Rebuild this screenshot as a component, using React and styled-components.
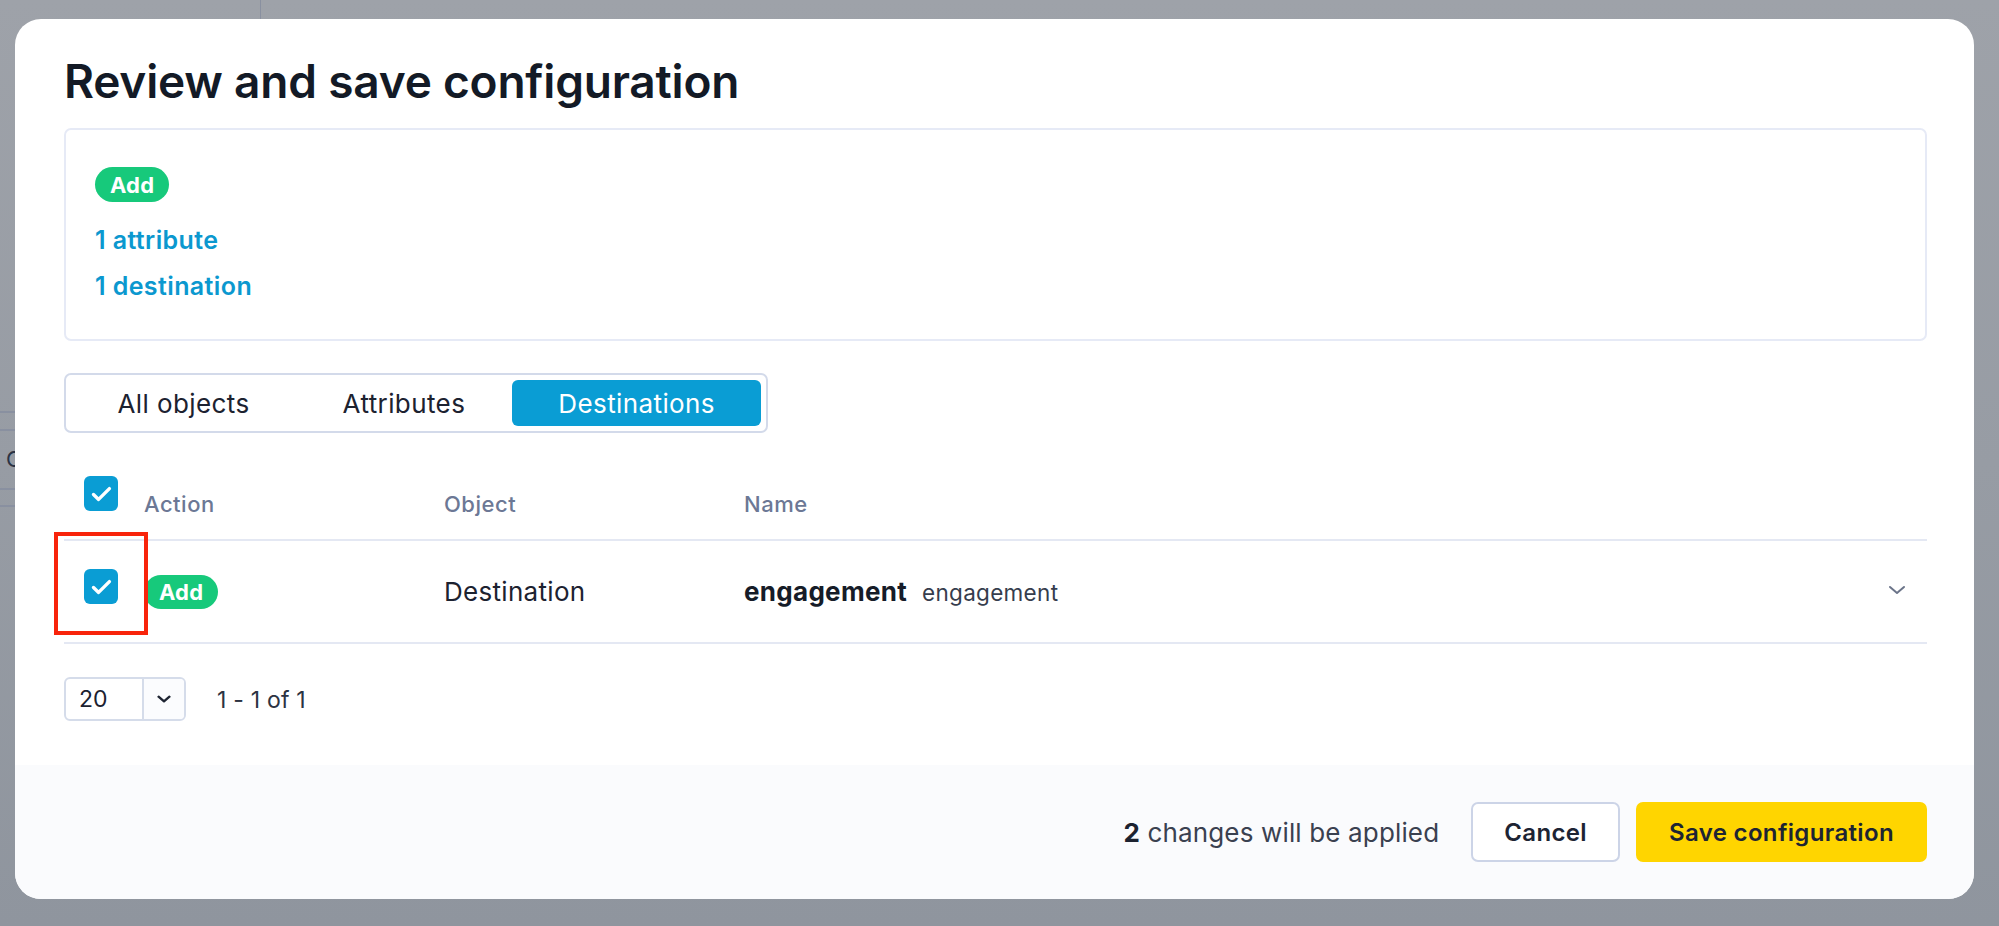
import React from 'react';
import styled, { createGlobalStyle } from 'styled-components';

const GlobalStyle = createGlobalStyle`
  html, body {
    margin: 0;
    padding: 0;
    background: #979ca4;
  }
  * {
    box-sizing: border-box;
  }
  body {
    font-family: Inter, "Noto Sans", "Liberation Sans", sans-serif;
    -webkit-font-smoothing: antialiased;
  }
`;

const Screen = styled.div`
  position: relative;
  width: 1999px;
  height: 926px;
  overflow: hidden;
  padding: 19px 25px 27px 15px;
  background: linear-gradient(180deg, #9ea2a9 0%, #979ca4 50%, #8f959e 100%);
`;

/* faint bits of the app that sits behind the overlay */
const BehindLine = styled.div`
  position: absolute;
  background: #8990a0;
  ${p => (p.$vertical
    ? `left: ${p.$x}px; top: 0; width: 1px; height: ${p.$len}px;`
    : `top: ${p.$y}px; left: 0; height: 2px; width: ${p.$len}px;`)}
`;

const BehindGlyph = styled.span`
  position: absolute;
  left: 6px;
  top: 446px;
  font-size: 22px;
  color: #2b3344;
`;

const Modal = styled.div`
  position: relative;
  width: 1959px;
  height: 880px;
  background: #ffffff;
  border-radius: 26px;
  overflow: hidden;
  display: flex;
  flex-direction: column;
`;

const Body = styled.div`
  flex: 1;
  padding: 35px 47px 0 49px;
`;

const Title = styled.h1`
  margin: 0 0 19px;
  font-size: 46px;
  line-height: 55px;
  font-weight: 600;
  color: #131a26;
  letter-spacing: -0.2px;
`;

const SummaryBox = styled.div`
  height: 213px;
  border: 2px solid #e6eaf6;
  border-radius: 7px;
  padding: 37px 29px;
`;

const Badge = styled.span`
  display: inline-flex;
  align-items: center;
  justify-content: center;
  height: ${p => p.$h}px;
  padding: 0 ${p => p.$px}px;
  border-radius: 18px;
  background: #17c97b;
  color: #ffffff;
  font-size: 22px;
  font-weight: 700;
  letter-spacing: 0.2px;
`;

const LinkList = styled.div`
  display: flex;
  flex-direction: column;
  gap: 14px;
  margin-top: 22px;
`;

const SummaryLink = styled.a`
  font-size: 25px;
  line-height: 32px;
  font-weight: 600;
  letter-spacing: 0.4px;
  color: #0b98cf;
  text-decoration: none;
`;

const Tabs = styled.div`
  display: inline-flex;
  margin-top: 32px;
  height: 60px;
  padding: 5px;
  border: 2px solid #d3daea;
  border-radius: 7px;
`;

const Tab = styled.button`
  height: 46px;
  padding: 0 46.5px;
  border: none;
  border-radius: 6px;
  font-family: inherit;
  font-size: 26px;
  font-weight: 400;
  letter-spacing: 0.4px;
  background: ${p => (p.$active ? '#0a9dd4' : 'transparent')};
  color: ${p => (p.$active ? '#ffffff' : '#1c2230')};
`;

const Table = styled.div`
  margin-top: 43px;
`;

const Row = styled.div`
  display: grid;
  grid-template-columns: 80px 300px 300px 1fr 60px;
  align-items: ${p => (p.$head ? 'start' : 'center')};
  height: ${p => (p.$head ? 65 : 103)}px;
  border-bottom: 2px solid #e4e8f3;
`;

const CheckCell = styled.div`
  padding-left: 20px;
  margin-bottom: ${p => (p.$offset ? 10 : 0)}px;
`;

const Checkbox = styled.span`
  display: flex;
  align-items: center;
  justify-content: center;
  width: 34px;
  height: 35px;
  border-radius: 6px;
  background: #0a9dd4;
`;

const HeadCell = styled.div`
  margin-top: 13px;
  font-size: 22px;
  line-height: 30px;
  font-weight: 500;
  letter-spacing: 0.5px;
  color: #6c7895;
`;

const Cell = styled.div`
  font-size: 26px;
  letter-spacing: 0.3px;
  color: #1c2230;
  display: flex;
  align-items: baseline;
  gap: 15px;
`;

const NameMain = styled.span`
  font-weight: 700;
  color: #161c28;
`;

const NameSub = styled.span`
  font-size: 22.5px;
  color: #363d4d;
`;

const ExpandCell = styled.div`
  display: flex;
  justify-content: flex-end;
  padding-right: 21px;
  margin-bottom: 4px;
`;

const Pager = styled.div`
  display: flex;
  align-items: center;
  gap: 31px;
  margin-top: 33px;
`;

const PageSelect = styled.div`
  display: flex;
  width: 122px;
  height: 44px;
  border: 2px solid #d5dcea;
  border-radius: 6px;
  overflow: hidden;
`;

const PageValue = styled.span`
  width: 78px;
  padding-left: 13px;
  display: flex;
  align-items: center;
  font-size: 23px;
  color: #1c2230;
  border-right: 2px solid #d5dcea;
`;

const PageArrow = styled.span`
  flex: 1;
  display: flex;
  align-items: center;
  justify-content: center;
  background: #fbfcfe;
`;

const PageInfo = styled.span`
  font-size: 23px;
  letter-spacing: 0.2px;
  color: #2c3342;
  margin-top: 2px;
`;

const Footer = styled.div`
  height: 134px;
  background: #fafbfd;
  display: flex;
  align-items: center;
  justify-content: flex-end;
  padding: 0 47px;
`;

const ChangesNote = styled.span`
  font-size: 26px;
  letter-spacing: 0.15px;
  color: #3a4150;
  margin-right: 32px;
  b {
    font-weight: 700;
    color: #1c2230;
  }
`;

const Button = styled.button`
  height: 60px;
  padding: 0 ${p => p.$px}px;
  margin-left: ${p => p.$gap}px;
  border-radius: 7px;
  font-family: inherit;
  font-size: 24px;
  font-weight: 600;
  letter-spacing: 0.35px;
  color: #1d2433;
  border: 2px solid ${p => (p.$primary ? '#ffd500' : '#ccd4e7')};
  background: ${p => (p.$primary ? '#ffd500' : '#ffffff')};
`;

/* red annotation frame drawn over the first row checkbox */
const Highlight = styled.div`
  position: absolute;
  left: 39px;
  top: 513px;
  width: 94px;
  height: 103px;
  border: 4px solid #f8240b;
  pointer-events: none;
`;

const Check = () => (
  <svg width="21" height="16" viewBox="0 0 21 16" fill="none">
    <path d="M2.5 8.5 L7.6 13.4 L18.4 2.6" stroke="#fff" strokeWidth="3.4" strokeLinecap="round" strokeLinejoin="round" />
  </svg>
);

const Chevron = ({ w, h, color, sw }) => (
  <svg width={w} height={h} viewBox="0 0 18 10" fill="none">
    <path d="M2 2 L9 8 L16 2" stroke={color} strokeWidth={sw} strokeLinecap="round" strokeLinejoin="round" />
  </svg>
);

export default function App() {
  return (
    <Screen>
      <GlobalStyle />
      <BehindLine $vertical $x={260} $len={19} />
      <BehindLine $y={411} $len={15} />
      <BehindLine $y={429} $len={15} />
      <BehindLine $y={488} $len={15} />
      <BehindLine $y={505} $len={15} />
      <BehindGlyph>C</BehindGlyph>
      <Modal>
        <Body>
          <Title>Review and save configuration</Title>
          <SummaryBox>
            <Badge $h={35} $px={15}>Add</Badge>
            <LinkList>
              <SummaryLink href="#">1 attribute</SummaryLink>
              <SummaryLink href="#">1 destination</SummaryLink>
            </LinkList>
          </SummaryBox>
          <Tabs>
            <Tab>All objects</Tab>
            <Tab>Attributes</Tab>
            <Tab $active>Destinations</Tab>
          </Tabs>
          <Table>
            <Row $head>
              <CheckCell>
                <Checkbox><Check /></Checkbox>
              </CheckCell>
              <HeadCell>Action</HeadCell>
              <HeadCell>Object</HeadCell>
              <HeadCell>Name</HeadCell>
              <div />
            </Row>
            <Row>
              <CheckCell $offset>
                <Checkbox><Check /></Checkbox>
              </CheckCell>
              <Cell>
                <Badge $h={34} $px={15}>Add</Badge>
              </Cell>
              <Cell>Destination</Cell>
              <Cell>
                <NameMain>engagement</NameMain>
                <NameSub>engagement</NameSub>
              </Cell>
              <ExpandCell>
                <Chevron w={18} h={10} color="#6b7489" sw={2} />
              </ExpandCell>
            </Row>
          </Table>
          <Pager>
            <PageSelect>
              <PageValue>20</PageValue>
              <PageArrow>
                <Chevron w={14} h={8} color="#1f2533" sw={3} />
              </PageArrow>
            </PageSelect>
            <PageInfo>1 - 1 of 1</PageInfo>
          </Pager>
        </Body>
        <Footer>
          <ChangesNote><b>2</b> changes will be applied</ChangesNote>
          <Button $px={31} $gap={0}>Cancel</Button>
          <Button $primary $px={31} $gap={16}>Save configuration</Button>
        </Footer>
        <Highlight />
      </Modal>
    </Screen>
  );
}
